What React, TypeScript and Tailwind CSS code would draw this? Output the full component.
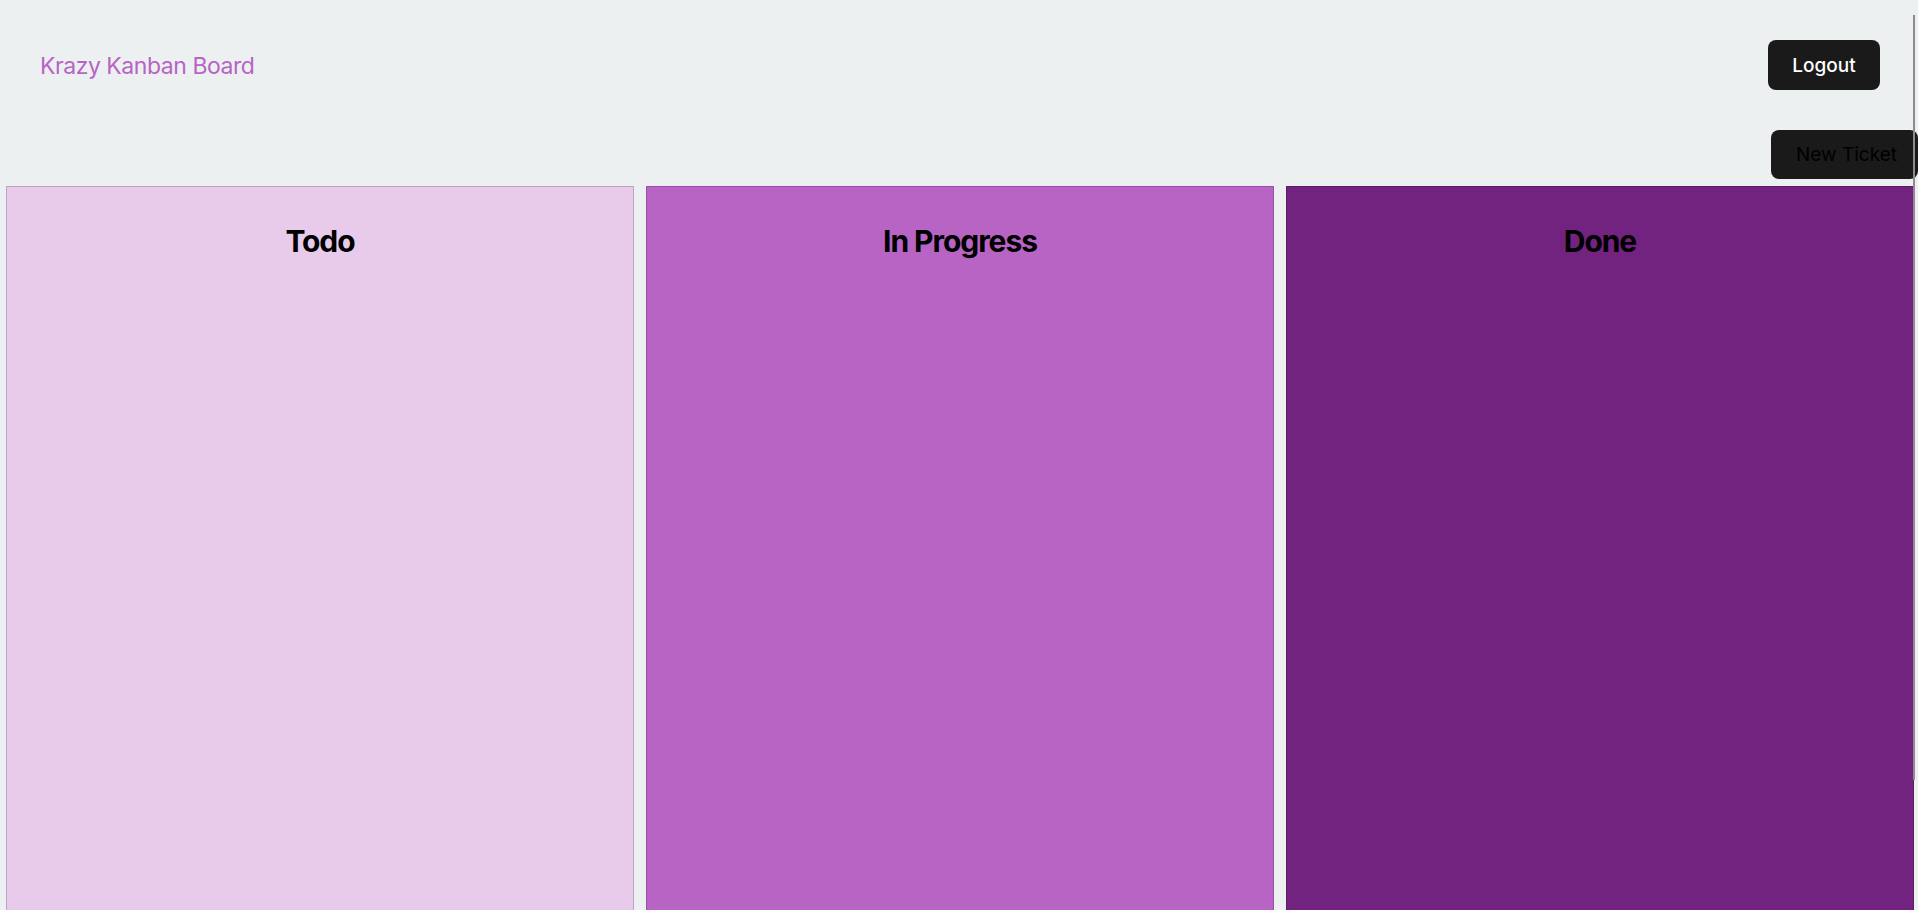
import React from 'react';

interface Column {
  title: string;
  bg: string;
}

const COLUMNS: Column[] = [
  { title: 'Todo', bg: 'bg-[#e8cbea] border-[#bca3c4]' },
  { title: 'In Progress', bg: 'bg-[#b864c4] border-[#9a4ea8]' },
  { title: 'Done', bg: 'bg-[#72227f] border-[#5e1a69]' },
];

export default function App() {
  return (
    <div
      className="relative h-[910px] w-full overflow-hidden bg-[#ecf0f1]"
      style={{ fontFamily: 'Inter, "Noto Sans", sans-serif' }}
    >
      <header className="flex items-center justify-between pl-[40px] pr-[38px] pt-[40px]">
        <h1 className="pt-[2px] text-[23px] font-normal leading-none tracking-[-0.02em] text-[#b864c4]">
          Krazy Kanban Board
        </h1>
        <button className="h-[50px] w-[112px] rounded-lg bg-[#1a1a1a] pt-[2px] text-[19px] font-medium text-white">
          Logout
        </button>
      </header>

      <div className="mt-[40px] flex justify-end">
        <button className="h-[49px] w-[147px] rounded-lg bg-[#1a1a1a] pl-[25px] pt-[2px] text-left text-[19px] text-black">
          New Ticket
        </button>
      </div>

      <main className="mt-[7px] flex gap-3 pl-[6px]">
        {COLUMNS.map((col) => (
          <section key={col.title} className={`h-[800px] w-[628px] border ${col.bg}`}>
            <h2 className="pt-[36px] text-center text-[30px] font-bold leading-[36px] tracking-[-0.035em] text-black">
              {col.title}
            </h2>
          </section>
        ))}
      </main>

      <div className="absolute left-[1913px] top-[15px] h-[765px] w-[2px] bg-[#8c8c8c]" />
    </div>
  );
}
